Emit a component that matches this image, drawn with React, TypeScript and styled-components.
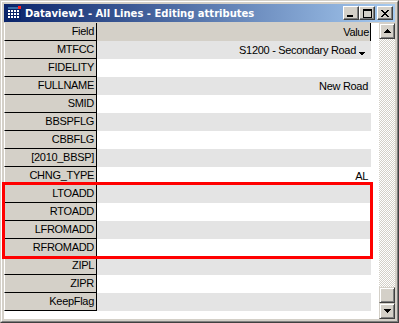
import React from "react";
import styled, { createGlobalStyle } from "styled-components";

const GlobalStyle = createGlobalStyle`
  html, body { margin: 0; padding: 0; background: #d4d0c8; }
  * { box-sizing: border-box; }
`;

const Window = styled.div`
  position: relative;
  width: 399px;
  height: 323px;
  border: 1px solid;
  border-color: #d4d0c8 #404040 #404040 #d4d0c8;
  font-family: "Liberation Sans", Arial, sans-serif;
`;

const Frame = styled.div`
  height: 100%;
  border: 1px solid;
  border-color: #ffffff #808080 #808080 #ffffff;
  background: #d4d0c8;
  padding: 2px;
  display: flex;
  flex-direction: column;
`;

const TitleBar = styled.div`
  height: 18px;
  margin-bottom: 1px;
  background: linear-gradient(to right, #0a246a, #a6caf0);
  display: flex;
  align-items: center;
  padding: 0 2px 0 2px;
`;

const TitleText = styled.div`
  flex: 1;
  color: #ffffff;
  font-weight: bold;
  font-family: "DejaVu Sans", "Liberation Sans", sans-serif;
  font-size: 10px;
  letter-spacing: 0;
  padding-left: 3px;
  white-space: nowrap;
`;

const CaptionGroup = styled.div`
  display: flex;
  align-items: center;
`;

const CaptionButton = styled.div<{ $gap?: boolean }>`
  width: 16px;
  height: 14px;
  margin-left: ${(p) => (p.$gap ? "2px" : "0")};
  background: #d4d0c8;
  border-style: solid;
  border-width: 1px;
  border-color: #ffffff #404040 #404040 #ffffff;
  box-shadow: inset -1px -1px 0 #808080;
  display: flex;
  align-items: center;
  justify-content: center;
  svg { display: block; }
`;

const Client = styled.div`
  height: 296px;
  background: #ffffff;
  display: flex;
`;

const Grid = styled.div`
  width: 367px;
  display: flex;
  flex-direction: column;
`;

const Row = styled.div`
  display: flex;
  height: 18px;
`;

const FieldCell = styled.div`
  width: 93px;
  height: 18px;
  background: #d4d0c8;
  border-left: 1px solid #ffffff;
  border-right: 1px solid #000000;
  border-bottom: 1px solid #000000;
  font-size: 11px;
  color: #000;
  text-align: right;
  padding-right: 2px;
  line-height: 17px;
  white-space: nowrap;
  letter-spacing: -0.3px;
`;

const ValueCell = styled.div<{ $shade: "header" | "grey" | "white" }>`
  width: 274px;
  height: 18px;
  background: ${(p) =>
    p.$shade === "header" ? "#d4d0c8" : p.$shade === "grey" ? "#e4e4e4" : "#ffffff"};
  border-right: 1px solid ${(p) => (p.$shade === "header" ? "#000000" : "transparent")};
  font-size: 11px;
  color: #000;
  padding-right: ${(p) => (p.$shade === "header" ? "1px" : "2px")};
  line-height: 18px;
  white-space: nowrap;
  letter-spacing: -0.3px;
  display: flex;
  justify-content: flex-end;
  align-items: center;
`;

const DropArrow = styled.svg`
  margin-left: 3px;
  margin-right: 3px;
  margin-top: 7px;
`;

const Gap = styled.div`
  width: 8px;
`;

const ScrollBar = styled.div`
  width: 16px;
  display: flex;
  flex-direction: column;
`;

const ScrollButton = styled.div`
  width: 16px;
  height: 16px;
  background: #d4d0c8;
  border-style: solid;
  border-width: 1px;
  border-color: #d4d0c8 #404040 #404040 #d4d0c8;
  box-shadow: inset 1px 1px 0 #ffffff, inset -1px -1px 0 #808080;
  display: flex;
  align-items: center;
  justify-content: center;
  svg { display: block; }
`;

const Track = styled.div`
  flex: 1;
  background-color: #ffffff;
  background-image: repeating-conic-gradient(#d4d0c8 0 25%, #ffffff 0 50%);
  background-size: 2px 2px;
`;

const Highlight = styled.div`
  position: absolute;
  left: 1px;
  top: 181px;
  width: 371px;
  height: 77px;
  border: 3px solid #ff0000;
  pointer-events: none;
`;

const AppIcon = () => (
  <svg width="16" height="16" viewBox="0 0 16 16" shapeRendering="crispEdges">
    <rect x="1" y="1" width="14" height="14" fill="#0a246a" />
    <rect x="2" y="2" width="12" height="2" fill="#3a6ea5" />
    <rect x="12" y="1" width="3" height="3" fill="#ff2020" />
    {[5, 8, 11].map((y) =>
      [2, 5, 8, 11].map((x) => (
        <rect key={`${x}-${y}`} x={x} y={y} width="2" height="2" fill="#ffffff" />
      ))
    )}
  </svg>
);

const MinGlyph = () => (
  <svg width="8" height="8" viewBox="0 0 8 8" shapeRendering="crispEdges">
    <rect x="0" y="6" width="6" height="2" fill="#000" />
  </svg>
);

const MaxGlyph = () => (
  <svg width="9" height="9" viewBox="0 0 9 9" shapeRendering="crispEdges">
    <rect x="0.5" y="1.5" width="8" height="7" fill="none" stroke="#000" />
    <rect x="0" y="0" width="9" height="2" fill="#000" />
  </svg>
);

const CloseGlyph = () => (
  <svg width="8" height="7" viewBox="0 0 8 7" shapeRendering="crispEdges">
    {[0, 1, 2, 3, 4, 5, 6].map((i) => (
      <React.Fragment key={i}>
        <rect x={i} y={i} width="2" height="1" fill="#000" />
        <rect x={6 - i} y={i} width="2" height="1" fill="#000" />
      </React.Fragment>
    ))}
  </svg>
);

const UpArrow = () => (
  <svg width="7" height="4" viewBox="0 0 7 4" shapeRendering="crispEdges">
    <rect x="3" y="0" width="1" height="1" fill="#000" />
    <rect x="2" y="1" width="3" height="1" fill="#000" />
    <rect x="1" y="2" width="5" height="1" fill="#000" />
    <rect x="0" y="3" width="7" height="1" fill="#000" />
  </svg>
);

const DownArrow = () => (
  <svg width="7" height="4" viewBox="0 0 7 4" shapeRendering="crispEdges">
    <rect x="0" y="0" width="7" height="1" fill="#000" />
    <rect x="1" y="1" width="5" height="1" fill="#000" />
    <rect x="2" y="2" width="3" height="1" fill="#000" />
    <rect x="3" y="3" width="1" height="1" fill="#000" />
  </svg>
);

const rows: { field: string; value?: string; dropdown?: boolean }[] = [
  { field: "MTFCC", value: "S1200 - Secondary Road", dropdown: true },
  { field: "FIDELITY" },
  { field: "FULLNAME", value: "New Road" },
  { field: "SMID" },
  { field: "BBSPFLG" },
  { field: "CBBFLG" },
  { field: "[2010_BBSP]" },
  { field: "CHNG_TYPE", value: "AL" },
  { field: "LTOADD" },
  { field: "RTOADD" },
  { field: "LFROMADD" },
  { field: "RFROMADD" },
  { field: "ZIPL" },
  { field: "ZIPR" },
  { field: "KeepFlag" },
];

export default function App() {
  return (
    <>
      <GlobalStyle />
      <Window>
        <Frame>
          <TitleBar>
            <AppIcon />
            <TitleText>Dataview1 - All Lines - Editing attributes</TitleText>
            <CaptionGroup>
              <CaptionButton>
                <MinGlyph />
              </CaptionButton>
              <CaptionButton>
                <MaxGlyph />
              </CaptionButton>
              <CaptionButton $gap>
                <CloseGlyph />
              </CaptionButton>
            </CaptionGroup>
          </TitleBar>
          <Client>
            <Grid>
              <Row>
                <FieldCell>Field</FieldCell>
                <ValueCell $shade="header">Value</ValueCell>
              </Row>
              {rows.map((r, i) => (
                <Row key={r.field}>
                  <FieldCell>{r.field}</FieldCell>
                  <ValueCell $shade={i % 2 === 0 ? "grey" : "white"}>
                    {r.value}
                    {r.dropdown && (
                      <DropArrow width="6" height="3" viewBox="0 0 6 3" shapeRendering="crispEdges">
                        <rect x="0" y="0" width="6" height="1" fill="#000" />
                        <rect x="1" y="1" width="4" height="1" fill="#000" />
                        <rect x="2" y="2" width="2" height="1" fill="#000" />
                      </DropArrow>
                    )}
                  </ValueCell>
                </Row>
              ))}
            </Grid>
            <Gap />
            <ScrollBar>
              <ScrollButton>
                <UpArrow />
              </ScrollButton>
              <Track />
              <ScrollButton />
              <ScrollButton>
                <DownArrow />
              </ScrollButton>
            </ScrollBar>
          </Client>
        </Frame>
        <Highlight />
      </Window>
    </>
  );
}
